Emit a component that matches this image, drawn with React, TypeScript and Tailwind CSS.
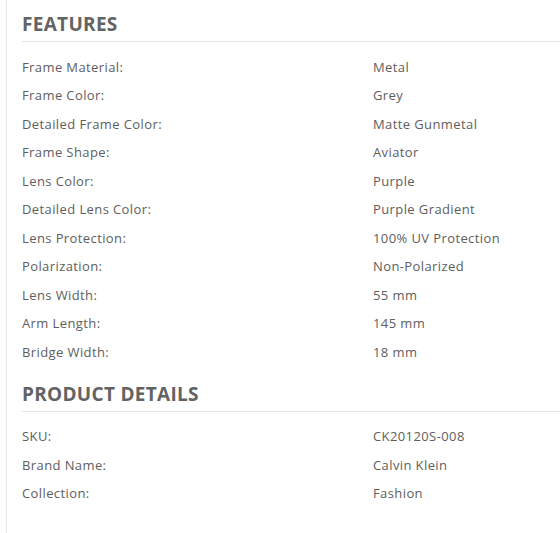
import React from "react";

const features: [string, string][] = [
  ["Frame Material:", "Metal"],
  ["Frame Color:", "Grey"],
  ["Detailed Frame Color:", "Matte Gunmetal"],
  ["Frame Shape:", "Aviator"],
  ["Lens Color:", "Purple"],
  ["Detailed Lens Color:", "Purple Gradient"],
  ["Lens Protection:", "100% UV Protection"],
  ["Polarization:", "Non-Polarized"],
  ["Lens Width:", "55 mm"],
  ["Arm Length:", "145 mm"],
  ["Bridge Width:", "18 mm"],
];

const details: [string, string][] = [
  ["SKU:", "CK20120S-008"],
  ["Brand Name:", "Calvin Klein"],
  ["Collection:", "Fashion"],
];

function Section({ title, rows }: { title: string; rows: [string, string][] }) {
  return (
    <div>
      <h2 className="h-[42px] pt-[11px] border-b border-[#e3e3e3] text-[19px] leading-[26px] font-bold text-[#636363] tracking-[0.3px]">
        {title}
      </h2>
      <div className="pt-[11px]">
        {rows.map(([k, v]) => (
          <div key={k} className="flex h-[28.5px] items-center text-[13px] text-[#5e5e5e] tracking-[0.4px]">
            <div className="w-[351px]">{k}</div>
            <div>{v}</div>
          </div>
        ))}
      </div>
    </div>
  );
}

export default function App() {
  return (
    <div className="w-[560px] h-[533px] bg-white overflow-hidden" style={{ fontFamily: '"Open Sans", sans-serif' }}>
      <div className="ml-[6px] h-full border-l border-[#e6e6e6] pl-[15px] w-[700px]">
        <Section title="FEATURES" rows={features} />
        <div className="h-[3px]" />
        <Section title="PRODUCT DETAILS" rows={details} />
      </div>
    </div>
  );
}
